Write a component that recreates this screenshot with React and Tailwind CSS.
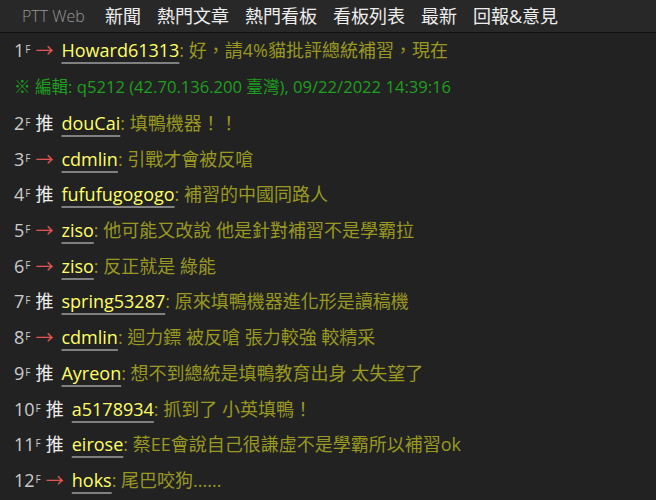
const nav = ["新聞", "熱門文章", "熱門看板", "看板列表", "最新", "回報&意見"];

const pushes = [
  { n: 1, tag: "→", id: "Howard61313", text: "好，請4%貓批評總統補習，現在" },
  { edit: "※ 編輯: q5212 (42.70.136.200 臺灣), 09/22/2022 14:39:16" },
  { n: 2, tag: "推", id: "douCai", text: "填鴨機器！！" },
  { n: 3, tag: "→", id: "cdmlin", text: "引戰才會被反嗆" },
  { n: 4, tag: "推", id: "fufufugogogo", text: "補習的中國同路人" },
  { n: 5, tag: "→", id: "ziso", text: "他可能又改說 他是針對補習不是學霸拉" },
  { n: 6, tag: "→", id: "ziso", text: "反正就是 綠能" },
  { n: 7, tag: "推", id: "spring53287", text: "原來填鴨機器進化形是讀稿機" },
  { n: 8, tag: "→", id: "cdmlin", text: "迴力鏢 被反嗆 張力較強 較精采" },
  { n: 9, tag: "推", id: "Ayreon", text: "想不到總統是填鴨教育出身 太失望了" },
  { n: 10, tag: "推", id: "a5178934", text: "抓到了 小英填鴨！" },
  { n: 11, tag: "推", id: "eirose", text: "蔡EE會說自己很謙虛不是學霸所以補習ok" },
  { n: 12, tag: "→", id: "hoks", text: "尾巴咬狗......" },
];

const font = {
  fontFamily: '"Open Sans", "Noto Sans CJK TC", sans-serif',
};

function PushRow({ p }) {
  if (p.edit) {
    return (
      <div className="h-[37px] flex items-center pl-[14px] text-[16.6px] text-[#1f9f1f] whitespace-nowrap">
        {p.edit}
      </div>
    );
  }
  return (
    <div className="h-[35.7px] flex items-center pl-[14px] text-[18px] whitespace-nowrap">
      <span className="text-[#cccccc]">{p.n}</span>
      <span className="text-[#cccccc] text-[10px] -mt-[2px] ml-[1px]">F</span>
      {p.tag === "推" ? (
        <span className="text-[#eeeeee] ml-[5px] mr-[8px]">推</span>
      ) : (
        <span className="text-[#e05555] ml-[5px] mr-[8px]">→</span>
      )}
      <span className="text-[#ffff66] underline decoration-[#808080] underline-offset-[5px] decoration-[2px]">
        {p.id}
      </span>
      <span className="text-[#999922]">: {p.text}</span>
    </div>
  );
}

export default function App() {
  return (
    <div className="w-[656px] h-[500px] bg-[#222222] overflow-hidden" style={font}>
      <div className="h-[33px] bg-[#282828] border-b border-[#111111] flex items-center pl-[22px]">
        <span className="text-[#999999] text-[16px] font-light mr-[20px]">PTT Web</span>
        {nav.map((n) => (
          <span key={n} className="text-[#eeeeee] text-[18px] mr-[16px]">
            {n}
          </span>
        ))}
      </div>
      <div>
        {pushes.map((p, i) => (
          <PushRow key={i} p={p} />
        ))}
      </div>
    </div>
  );
}
